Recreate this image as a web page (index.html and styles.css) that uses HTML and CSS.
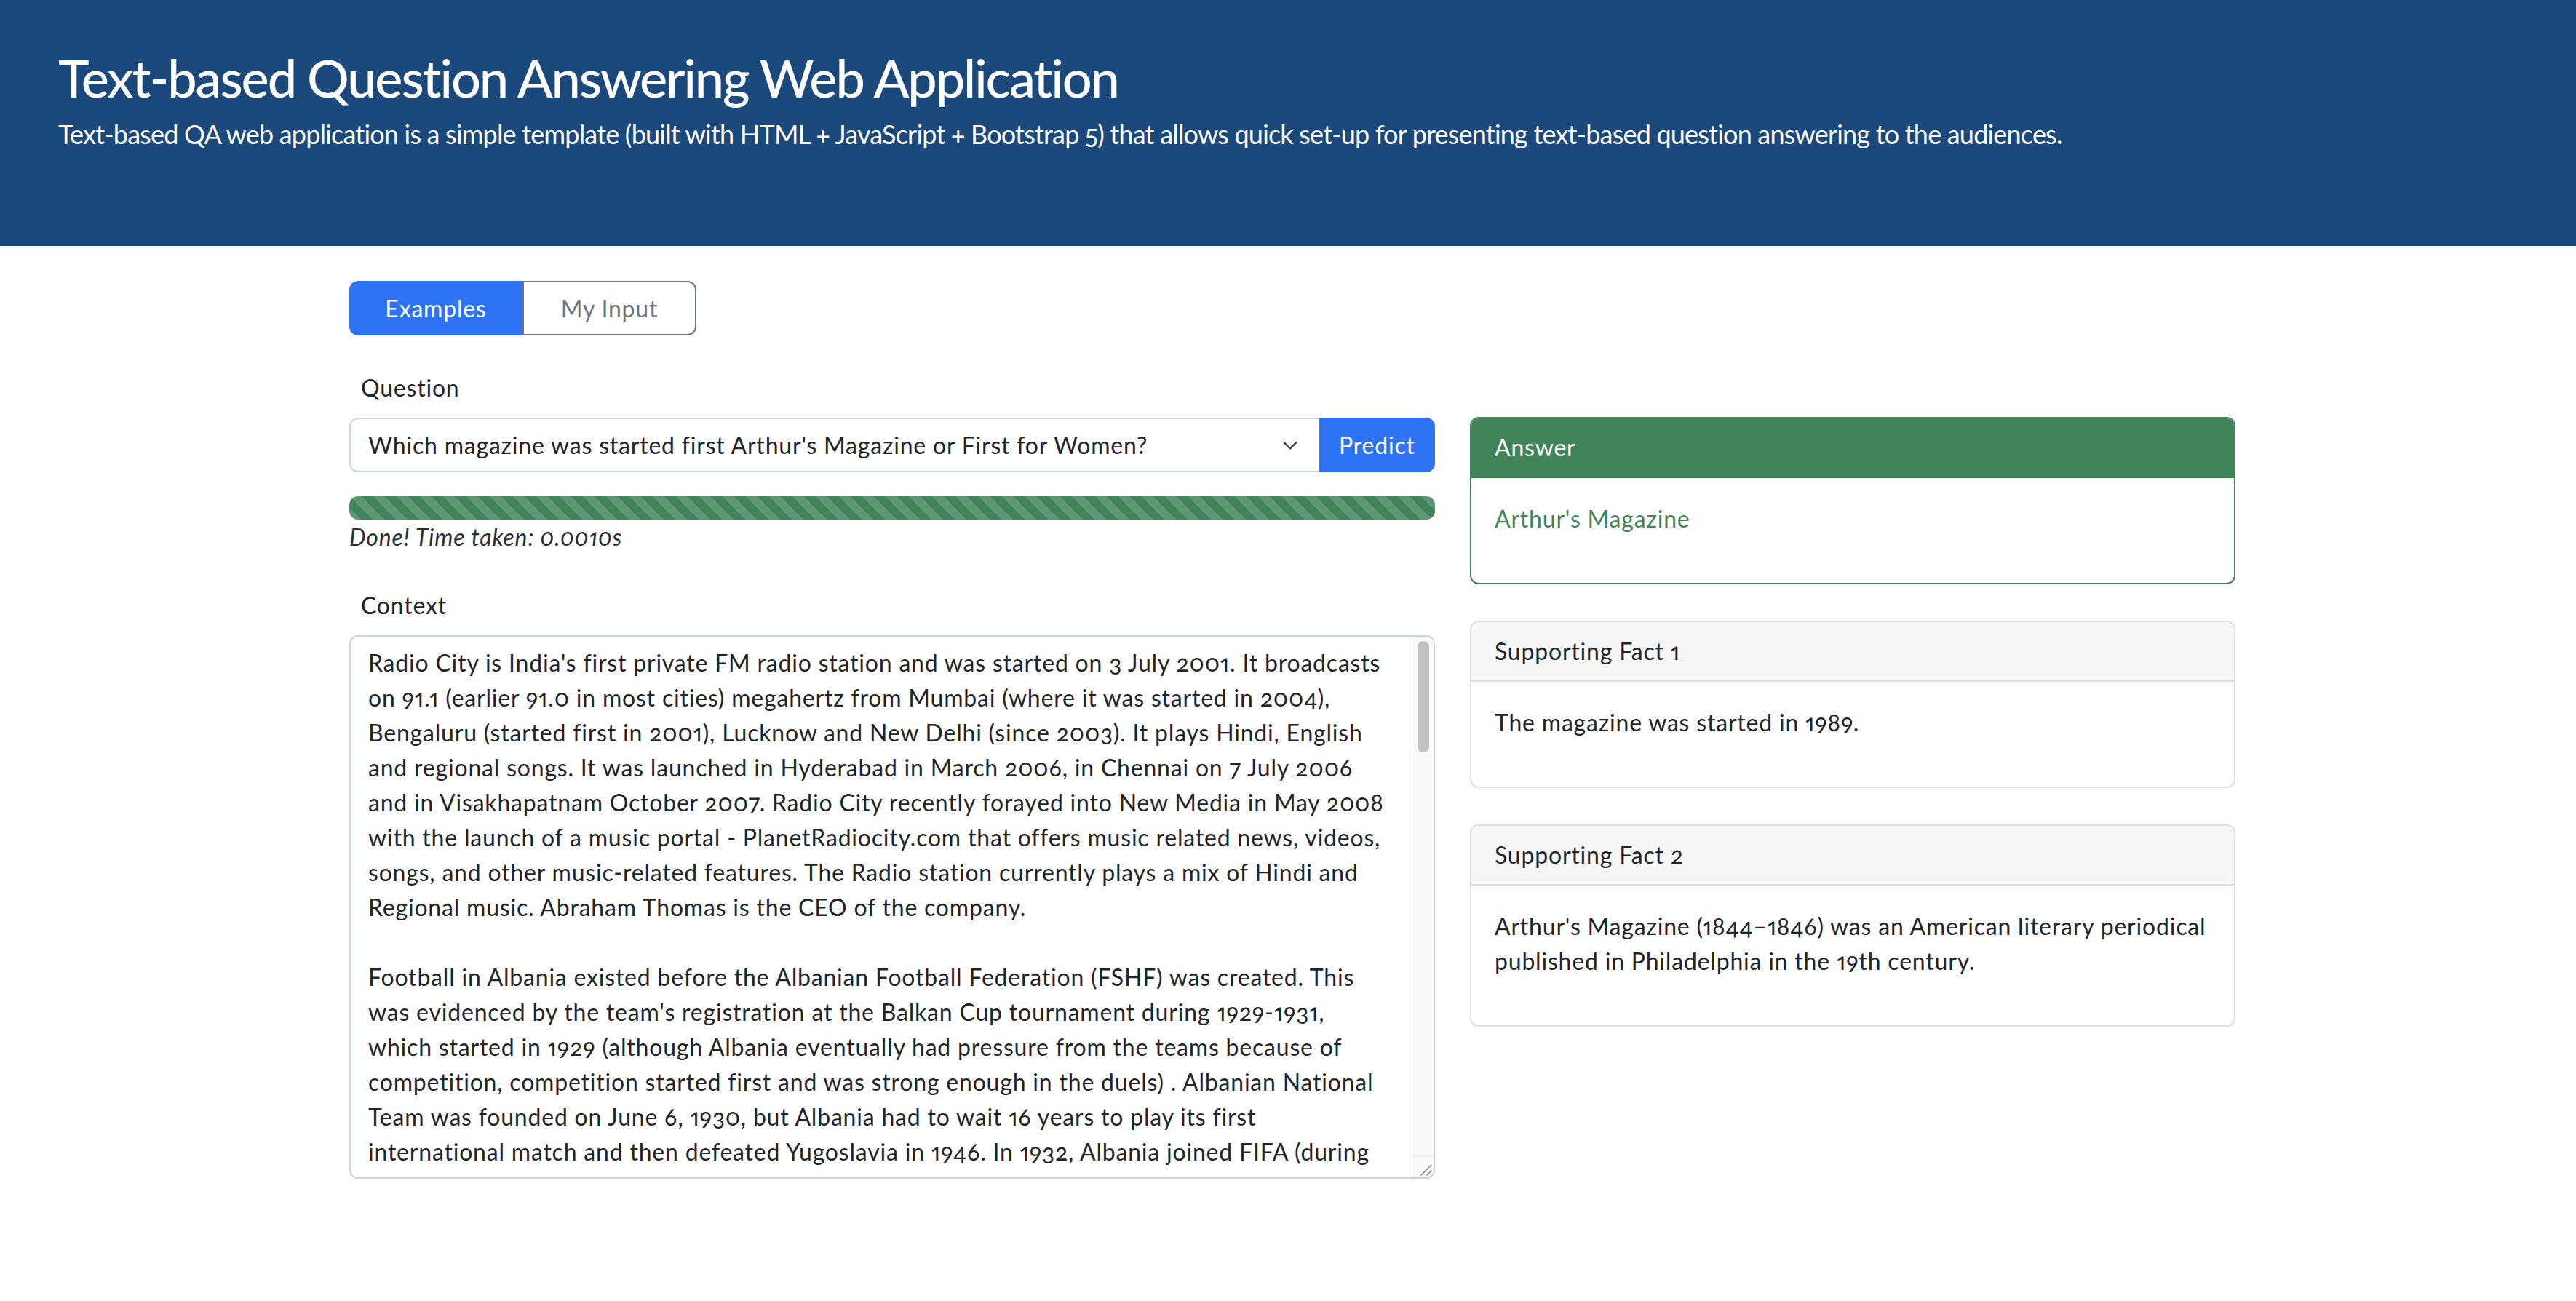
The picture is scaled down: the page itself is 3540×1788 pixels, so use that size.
FILE: index.html
```html
<!DOCTYPE html>
<html lang="en">
<head>
<meta charset="utf-8">
<title>Text-based Question Answering Web Application</title>
<link rel="stylesheet" href="styles.css">
</head>
<body>
<header class="hero">
  <h1 class="hero-title">Text-based Question Answering Web Application</h1>
  <p class="hero-lead">Text-based QA web application is a simple template (built with HTML + JavaScript + Bootstrap 5) that allows quick set-up for presenting text-based question answering to the audiences.</p>
</header>
<main class="container">
  <div class="tabs">
    <button class="tab tab-active">Examples</button>
    <button class="tab tab-outline">My Input</button>
  </div>
  <div class="layout">
    <section class="left-col">
      <div class="field-label">Question</div>
      <div class="input-group">
        <div class="select">
          <span class="select-text">Which magazine was started first Arthur's Magazine or First for Women?</span>
          <svg class="chevron" width="32" height="24" viewBox="0 0 16 16"><path d="m2.5 5.5 5.5 5.5 5.5-5.5" fill="none" stroke="#343a40" stroke-width="1.6" stroke-linecap="round" stroke-linejoin="round"/></svg>
        </div>
        <button class="predict">Predict</button>
      </div>
      <div class="progress"><div class="progress-bar"></div></div>
      <div class="status">Done! Time taken: 0.0010s</div>
      <div class="field-label context-label">Context</div>
      <div class="context-box">
        <textarea class="context" spellcheck="false">Radio City is India's first private FM radio station and was started on 3 July 2001. It broadcasts on 91.1 (earlier 91.0 in most cities) megahertz from Mumbai (where it was started in 2004), Bengaluru (started first in 2001), Lucknow and New Delhi (since 2003). It plays Hindi, English and regional songs. It was launched in Hyderabad in March 2006, in Chennai on 7 July 2006 and in Visakhapatnam October 2007. Radio City recently forayed into New Media in May 2008 with the launch of a music portal - PlanetRadiocity.com that offers music related news, videos, songs, and other music-related features. The Radio station currently plays a mix of Hindi and Regional music. Abraham Thomas is the CEO of the company.

Football in Albania existed before the Albanian Football Federation (FSHF) was created. This was evidenced by the team's registration at the Balkan Cup tournament during 1929-1931, which started in 1929 (although Albania eventually had pressure from the teams because of competition, competition started first and was strong enough in the duels) . Albanian National Team was founded on June 6, 1930, but Albania had to wait 16 years to play its first international match and then defeated Yugoslavia in 1946. In 1932, Albania joined FIFA (during the 12–16 June convention ) and in 1954 she was one of the founding members of UEFA.

Echosmith is an American, Corporate indie pop band formed in February 2009 in Chino, California. Originally formed as a quartet of siblings, the band currently consists of Sydney, Noah and Graham Sierota, following the departure of eldest sibling Jamie in late 2016. Echosmith started first as "Ready Set Go!" until they signed to Warner Bros. Records in May 2012. They are best known for their hit song "Cool Kids", which reached number 13 on the "Billboard" Hot 100 and was certified double platinum by the RIAA with over 1,200,000 sales in the United States and also double platinum by ARIA in Australia. The song was Warner Bros. Records' fifth-biggest-selling-digital song of 2014, with 1.3 million downloads sold. The band's debut album, "Talking Dreams", was released on October 8, 2013.

Women's colleges in the Southern United States refers to undergraduate, bachelor's degree–granting institutions, often liberal arts colleges, whose student populations consist exclusively or almost exclusively of women, located in the Southern United States. Many started first as girls' seminaries or academies. Salem College is the oldest female educational institution in the South and Wesleyan College is the first that was established specifically as a college for women. Some schools, such as Mary Baldwin University and Salem College, offer coeducational courses at the graduate level.

The First Arthur County Courthouse and Jail, was perhaps the smallest court house in the United States, and serves now as a museum.

Arthur's Magazine (1844–1846) was an American literary periodical published in Philadelphia in the 19th century. Edited by T.S. Arthur, it featured work by Edgar A. Poe, J.H. Ingraham, Sarah Josepha Hale, Thomas G. Spear, and others. In May 1846 it was merged into "Godey's Lady's Book".

The 2014–15 Ukrainian Hockey Championship was the 23rd season of the Ukrainian Hockey Championship. Only four teams participated in the league this season, because of the instability in Ukraine and that most of the clubs had economical issues. Generals Kiev was the only team that participated in the league the previous season, and the season started first after the year-end of 2014. The regular season included just 12 rounds, where all the teams went to the semifinals. In the final, ATEK Kiev defeated the regular season winner HK Kremenchuk.

First for Women is a woman's magazine published by Bauer Media Group in the USA. The magazine was started in 1989. It is based in Englewood Cliffs, New Jersey. In 2011 the circulation of the magazine was 1,310,696 copies.

The Freeway Complex Fire was a 2008 wildfire in the Santa Ana Canyon area of Orange County, California. The fire started as two separate fires on November 15, 2008. The "Freeway Fire" started first shortly after 9am with the "Landfill Fire" igniting approximately 2 hours later. These two separate fires merged a day later and ultimately destroyed 314 residences in Anaheim Hills and Yorba Linda.

William Rast is an American clothing line founded by Justin Timberlake and Trace Ayala. It is most known for their premium jeans. On October 17, 2006, Justin Timberlake and Trace Ayala put on their first fashion show to launch their new William Rast clothing line. The label also produces other clothing items such as jackets and tops. The company started first as a denim line, later evolving into a men’s and women’s clothing line.</textarea>
        <div class="scrollbar">
          <div class="scroll-track"><div class="scroll-thumb"></div></div>
          <div class="scroll-corner">
            <svg width="28" height="28" viewBox="0 0 28 28"><path d="M25 11 11 25M25 19 19 25" stroke="#8a8a8a" stroke-width="1.6" stroke-linecap="round"/></svg>
          </div>
        </div>
      </div>
    </section>
    <aside class="right-col">
      <div class="card card-answer">
        <div class="card-header">Answer</div>
        <div class="card-body"><p class="answer-text">Arthur's Magazine</p></div>
      </div>
      <div class="card">
        <div class="card-header">Supporting Fact 1</div>
        <div class="card-body"><p>The magazine was started in 1989.</p></div>
      </div>
      <div class="card">
        <div class="card-header">Supporting Fact 2</div>
        <div class="card-body"><p>Arthur's Magazine (1844–1846) was an American literary periodical published in Philadelphia in the 19th century.</p></div>
      </div>
    </aside>
  </div>
</main>
</body>
</html>
```

FILE: styles.css
```css
* { box-sizing: border-box; }

html, body {
  margin: 0;
  padding: 0;
  background: #fff;
}

body {
  font-family: "Lato", "Liberation Sans", sans-serif;
  font-size: 32px;
  line-height: 48px;
  letter-spacing: 0.8px;
  font-variant-numeric: oldstyle-nums proportional-nums;
  color: #212529;
}

.hero {
  background: #1b497b;
  color: #fff;
  padding: 58px 80px 124px;
}

.hero-title {
  margin: 0;
  font-size: 72px;
  line-height: 96px;
  font-weight: 500;
  letter-spacing: -2.1px;
}

.hero-lead {
  margin: 0;
  font-size: 36px;
  line-height: 60px;
  font-weight: 400;
  letter-spacing: -0.8px;
}

.container {
  width: 2592px;
  margin-left: calc(50% - 1290px);
}

.tabs {
  display: flex;
  margin-top: 48px;
}

.tab {
  font-family: inherit;
  font-size: 32px;
  line-height: 48px;
  letter-spacing: inherit;
  height: 75px;
  padding: 0;
  border: 2px solid;
  cursor: pointer;
}

.tab-active {
  width: 238px;
  background: #2e73f4;
  border-color: #2e73f4;
  color: #fff;
  border-radius: 12px 0 0 12px;
}

.tab-outline {
  width: 239px;
  background: #fff;
  border-color: #6c757d;
  color: #6c757d;
  border-radius: 0 12px 12px 0;
}

.layout {
  display: grid;
  grid-template-columns: 1492px 1052px;
  column-gap: 48px;
  margin-top: 48px;
  align-items: start;
}

.field-label {
  padding-left: 16px;
  margin-bottom: 17px;
}

.input-group {
  display: flex;
  height: 75px;
}

.select {
  flex: 1;
  display: flex;
  align-items: center;
  justify-content: space-between;
  padding: 0 24px;
  border: 2px solid #ced4da;
  border-right: none;
  border-radius: 12px 0 0 12px;
  background: #fff;
}

.chevron {
  display: block;
  flex: none;
}

.predict {
  width: 159px;
  font-family: inherit;
  font-size: 32px;
  letter-spacing: inherit;
  font-variant-numeric: inherit;
  padding: 0;
  color: #fff;
  background: #2e73f4;
  border: none;
  border-radius: 0 12px 12px 0;
}

.progress {
  margin-top: 33px;
  height: 32px;
  border-radius: 12px;
  overflow: hidden;
  background: #e9ecef;
}

.progress-bar {
  height: 100%;
  width: 100%;
  background-color: #418459;
  background-image: linear-gradient(45deg, rgba(255,255,255,.15) 25%, transparent 25%, transparent 50%, rgba(255,255,255,.15) 50%, rgba(255,255,255,.15) 75%, transparent 75%, transparent);
  background-size: 32px 32px;
}

.status {
  font-style: italic;
  font-weight: 400;
  color: #2b2f33;
}

.context-label {
  margin-top: 46px;
}

.context-box {
  display: flex;
  height: 747px;
  border: 2px solid #ced4da;
  border-radius: 12px;
  overflow: hidden;
  background: #fff;
}

.context {
  flex: 1;
  display: block;
  min-width: 0;
  margin: 0;
  padding: 12px 24px;
  border: none;
  font-family: inherit;
  font-size: 32px;
  line-height: 48px;
  letter-spacing: inherit;
  font-variant-numeric: inherit;
  color: #212529;
  background: #fff;
  resize: none;
  outline: none;
  overflow: hidden;
}

.scrollbar {
  flex: none;
  width: 30px;
  display: flex;
  flex-direction: column;
  background: #fafafa;
  border-left: 1px solid #e6e6e6;
}

.scroll-track {
  flex: 1;
  padding: 6px 6px 0 7px;
}

.scroll-thumb {
  height: 153px;
  background: #c1c1c1;
  border-radius: 8px;
}

.scroll-corner {
  height: 29px;
  border-top: 1px solid #e6e6e6;
  display: flex;
  align-items: flex-end;
  justify-content: flex-end;
}

.scroll-corner svg {
  display: block;
}

.right-col {
  margin-top: 64px;
}

.card {
  border: 2px solid #dfdfdf;
  border-radius: 12px;
  margin-bottom: 50px;
  overflow: hidden;
}

.card-header {
  padding: 16px 32px;
  background: #f7f7f7;
  border-bottom: 2px solid #dfdfdf;
}

.card-body {
  padding: 32px;
}

.card-body p {
  margin: 0 0 32px;
}

.card-answer {
  border-color: #418459;
}

.card-answer .card-header {
  background: #418459;
  border-bottom-color: #3a7a50;
  color: #fff;
}

.answer-text {
  color: #418459;
}
```
